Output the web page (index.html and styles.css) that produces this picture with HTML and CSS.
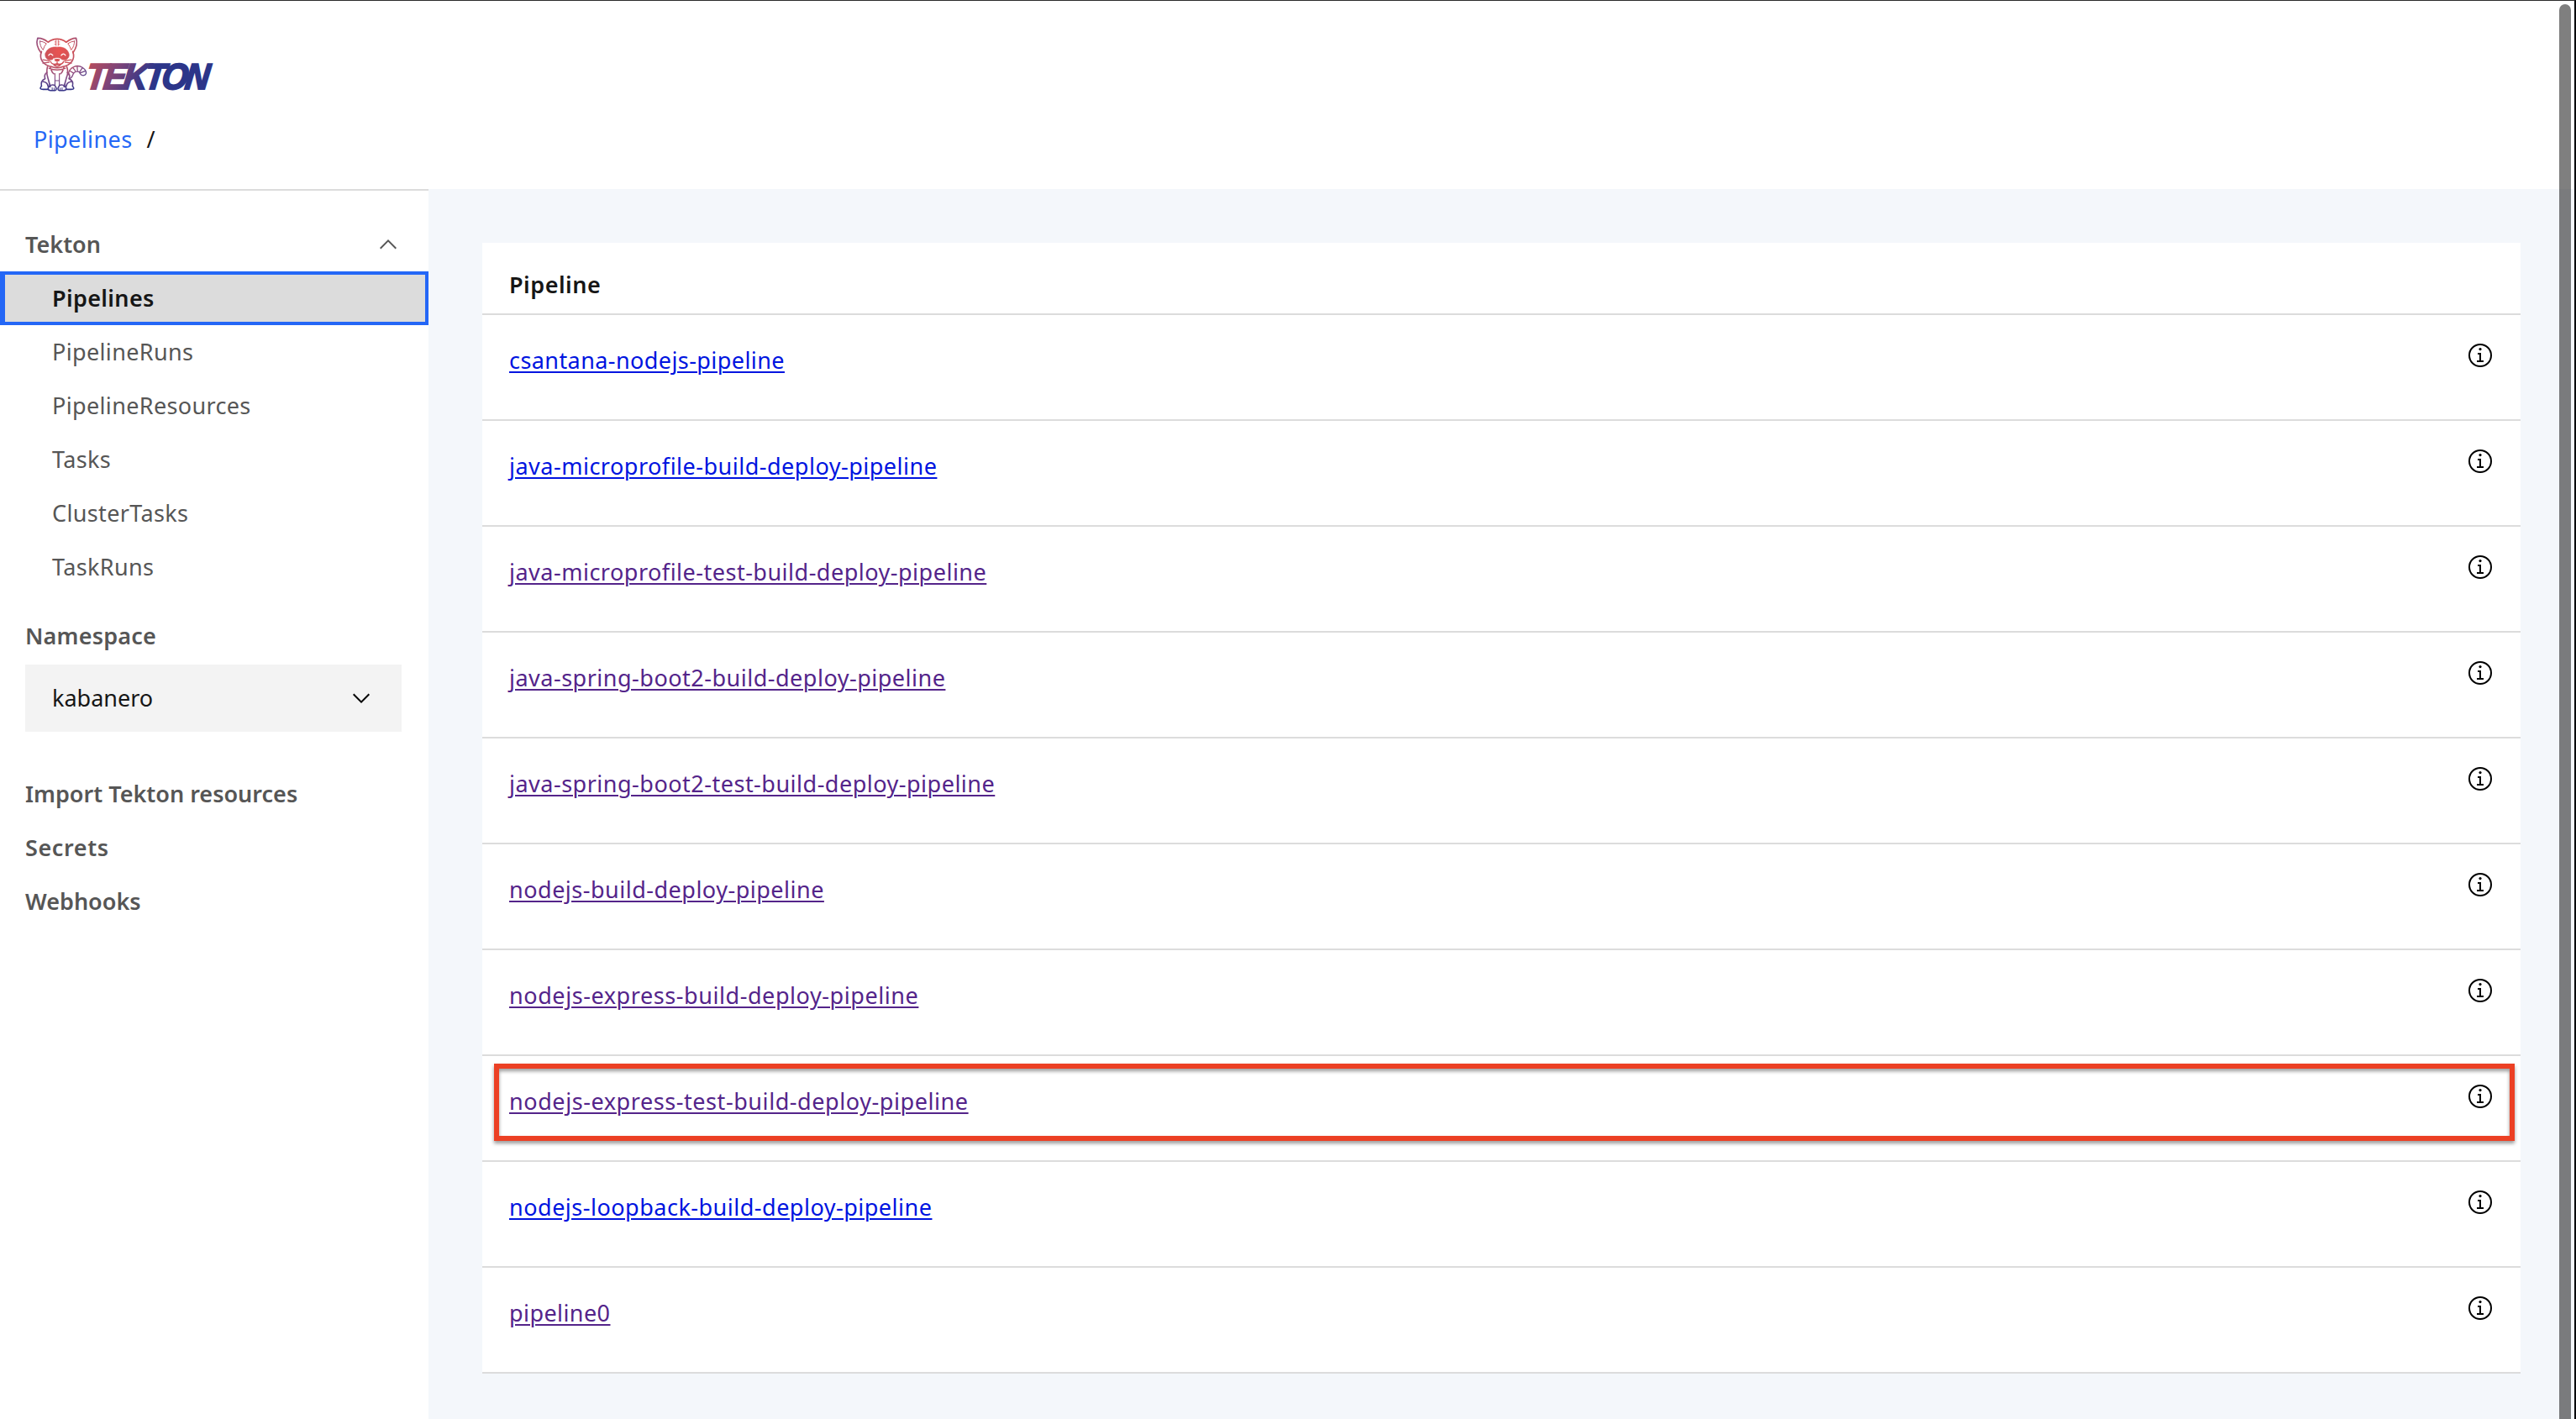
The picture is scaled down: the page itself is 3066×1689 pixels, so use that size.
FILE: index.html
```html
<!DOCTYPE html>
<html lang="en">
<head>
<meta charset="utf-8">
<title>Tekton Dashboard</title>
<link rel="stylesheet" href="styles.css">
</head>
<body>
<svg class="symbols" aria-hidden="true">
  <symbol id="info" viewBox="0 0 16 16">
    <circle cx="8" cy="8" r="6.5" fill="none" stroke="#000"/>
    <path d="M8.5 11V6.5h-2v1h1V11H6v1h4v-1z"/>
    <circle cx="8" cy="4.3" r=".8"/>
  </symbol>
  <symbol id="chevron" viewBox="0 0 16 16">
    <path d="M8 5l5 5-.7.7L8 6.4l-4.3 4.3L3 10z"/>
  </symbol>
</svg>
<header class="header">
  <svg class="logo" viewBox="0 0 780 270" role="img" aria-label="Tekton">
    <defs>
      <radialGradient id="cat" gradientUnits="userSpaceOnUse" cx="155" cy="95" r="150">
        <stop offset="0" stop-color="#ea5350"/>
        <stop offset=".32" stop-color="#cf5258"/>
        <stop offset=".65" stop-color="#8c4f86"/>
        <stop offset="1" stop-color="#2d3288"/>
      </radialGradient>
      <linearGradient id="word" gradientUnits="userSpaceOnUse" x1="10" y1="-110" x2="225" y2="0">
        <stop offset="0" stop-color="#b84c5c"/>
        <stop offset=".45" stop-color="#7f4478"/>
        <stop offset="1" stop-color="#2c3589"/>
      </linearGradient>
    </defs>
    <g transform="scale(.98)" fill="none" stroke="url(#cat)" stroke-width="5" stroke-linecap="round" stroke-linejoin="round">
      <path d="M88 100C74 82 71 62 76 47C92 47 105 54 114 62C134 46 160 46 180 62C190 54 202 47 216 47C221 62 218 82 205 100"/>
      <path d="M90 96C80 124 96 146 130 152Q147 158 164 152C198 146 214 124 204 96"/>
      <path d="M84 58C84 70 88 82 96 90Q99 76 108 67Q96 59 84 58zM210 58C210 70 206 82 198 90Q194 76 186 67Q198 59 210 58z" stroke-width="3"/>
      <path d="M143 61h-5M151 61h5M143 69h-5M151 69h5M143 54v20M151 54v20" stroke-width="2.5"/>
      <path d="M104 104C110 84 128 78 147 80C166 78 184 84 190 104C192 114 188 122 178 126Q164 128 158 121Q147 114 136 121Q130 128 116 126C106 122 102 114 104 104z" fill="url(#cat)" stroke-width="2"/>
      <path d="M116 110q7-11 15 0M162 110q8-11 15 0" stroke="#fff" stroke-width="4"/>
      <path d="M134 123q13-5 26 0q-2 11-13 12q-11-1-13-12z" fill="url(#cat)" stroke="#fff" stroke-width="3"/>
      <path d="M147 135v5M123 132q5 14 24 8q18 6 24-8M134 144q13 14 26 0zM95 126l24 4M95 138l23-3M199 126l-24 4M199 138l-23-3" stroke-width="4"/>
      <path d="M112 151C108 166 109 179 113 191L122 224M182 151C188 166 186 179 181 191L172 224M118 157q29 12 58 0M123 155Q127 172 135 177M171 155Q167 172 159 177"/>
      <path d="M110 172Q98 180 103 195Q86 202 90 222Q79 234 96 234H112M184 172Q197 180 190 195Q208 202 203 222Q214 234 198 234H182M97 206q15 2 17 17M197 206q-15 2-17 17"/>
      <path d="M139 176V219M155 176V219M139 202h16" stroke-width="3.5"/>
      <path d="M118 222Q108 237 123 238H139Q149 235 139 220Q130 214 118 222zM176 222Q186 237 171 238H155Q145 235 155 220Q164 214 176 222z"/>
      <path d="M129 228v8M165 228v8M136 229v7M158 229v7" stroke-width="3"/>
      <path d="M188 180C190 151 221 142 239 154C250 162 254 171 252 177C249 185 235 185 231 177C230 167 211 164 205 179Q202 190 194 194M193 166l14 9M204 154l9 12M220 149l1 17M239 155l-9 14M249 167l-17 6" stroke-width="4"/>
    </g>
    <text class="wordmark" transform="translate(243 227) skewX(-7) scale(.925 1)">TEKTON</text>
  </svg>
  <nav class="breadcrumb"><a class="crumb">Pipelines</a><span>/</span></nav>
</header>
<div class="shell">
  <aside class="sidebar">
    <div class="nav-item nav-heading"><span>Tekton</span><svg class="icon"><use href="#chevron"/></svg></div>
    <a class="nav-item nav-sub selected">Pipelines</a>
    <a class="nav-item nav-sub">PipelineRuns</a>
    <a class="nav-item nav-sub">PipelineResources</a>
    <a class="nav-item nav-sub">Tasks</a>
    <a class="nav-item nav-sub">ClusterTasks</a>
    <a class="nav-item nav-sub">TaskRuns</a>
    <div class="namespace">
      <div class="namespace-label">Namespace</div>
      <div class="select"><span>kabanero</span><svg class="icon down"><use href="#chevron"/></svg></div>
    </div>
    <a class="nav-item nav-heading">Import Tekton resources</a>
    <a class="nav-item nav-heading secrets">Secrets</a>
    <a class="nav-item nav-heading">Webhooks</a>
  </aside>
  <main class="content">
    <div class="table">
      <div class="thead">Pipeline</div>
      <div class="row"><a class="link tight">csantana-nodejs-pipeline</a><svg class="icon"><use href="#info"/></svg></div>
      <div class="row"><a class="link">java-microprofile-build-deploy-pipeline</a><svg class="icon"><use href="#info"/></svg></div>
      <div class="row"><a class="link visited">java-microprofile-test-build-deploy-pipeline</a><svg class="icon"><use href="#info"/></svg></div>
      <div class="row"><a class="link visited">java-spring-boot2-build-deploy-pipeline</a><svg class="icon"><use href="#info"/></svg></div>
      <div class="row"><a class="link visited">java-spring-boot2-test-build-deploy-pipeline</a><svg class="icon"><use href="#info"/></svg></div>
      <div class="row"><a class="link visited">nodejs-build-deploy-pipeline</a><svg class="icon"><use href="#info"/></svg></div>
      <div class="row"><a class="link visited wide">nodejs-express-build-deploy-pipeline</a><svg class="icon"><use href="#info"/></svg></div>
      <div class="row marked"><a class="link visited wide">nodejs-express-test-build-deploy-pipeline</a><svg class="icon"><use href="#info"/></svg></div>
      <div class="row"><a class="link">nodejs-loopback-build-deploy-pipeline</a><svg class="icon"><use href="#info"/></svg></div>
      <div class="row"><a class="link visited tight">pipeline0</a><svg class="icon"><use href="#info"/></svg></div>
    </div>
  </main>
</div>
<div class="scrollbar"></div>
</body>
</html>
```
FILE: styles.css
```css
* { box-sizing: border-box; }

body {
  margin: 0;
  height: 1689px;
  display: flex;
  flex-direction: column;
  position: relative;
  overflow: hidden;
  border-top: 1px solid #2b2b2b;
  border-right: 2px solid #07080c;
  background: #fff;
  color: #161616;
  font: 27px/36px "Noto Sans", sans-serif;
}

.symbols { display: none; }

.icon {
  width: 32px;
  height: 32px;
  flex: none;
}

.header {
  height: 224px;
  flex: none;
  padding: 29px 20px 0;
}

.logo {
  display: block;
  width: 260px;
  height: 90px;
  overflow: visible;
}

.wordmark {
  font: italic bold 130px "Liberation Sans", sans-serif;
  letter-spacing: -11px;
  fill: url(#word);
  stroke: url(#word);
  stroke-width: 6px;
}

.breadcrumb {
  display: flex;
  gap: 17px;
  margin: 28px 0 0 20px;
}

.crumb {
  color: #2467f6;
  letter-spacing: .4px;
}

.shell {
  flex: 1;
  display: flex;
  min-height: 0;
}

.sidebar {
  width: 510px;
  flex: none;
  border-top: 2px solid #dcdcdc;
  padding-top: 32px;
  color: #565656;
}

.nav-item {
  height: 64px;
  display: flex;
  align-items: center;
}

.nav-heading {
  justify-content: space-between;
  padding: 0 32px 0 30px;
  font-weight: 600;
}

.nav-heading .icon { fill: #565656; }

.nav-sub {
  padding-left: 62px;
  letter-spacing: .35px;
}

.selected {
  background: #dcdcdc;
  border: 4px solid #2467f6;
  border-left-width: 6px;
  padding-left: 56px;
  color: #161616;
  font-weight: 600;
}

.namespace { padding: 32px 32px 0 30px; }

.namespace-label {
  height: 52px;
  font-weight: 600;
  letter-spacing: .2px;
}

.select {
  height: 80px;
  margin-bottom: 42px;
  padding: 0 32px;
  display: flex;
  align-items: center;
  justify-content: space-between;
  background: #f3f3f3;
  color: #161616;
}

.down { transform: rotate(180deg); }

.secrets { letter-spacing: .6px; }

.content {
  flex: 1;
  background: #f4f7fb;
  padding: 64px 64px 0;
}

.table { background: #fff; }

.thead {
  height: 86px;
  padding: 32px 32px 0;
  border-bottom: 2px solid #dcdcdc;
  font-weight: 600;
  letter-spacing: .5px;
}

.row {
  height: 126px;
  position: relative;
  display: flex;
  justify-content: space-between;
  align-items: flex-start;
  padding: 32px 32px 0;
  border-bottom: 2px solid #dcdcdc;
}

.link {
  margin-top: 4px;
  color: #0014e0;
  letter-spacing: .5px;
  text-decoration: underline;
  text-decoration-thickness: 2px;
  text-underline-offset: 3px;
}

.visited { color: #54248a; }
.tight { letter-spacing: .42px; }
.wide { letter-spacing: .57px; }

.marked::after {
  content: "";
  position: absolute;
  inset: 9px 7px 23px 14px;
  border: 6px solid #ec4024;
  filter: drop-shadow(0 3px 2px rgba(0, 0, 0, .4));
}

.scrollbar {
  position: absolute;
  top: 4px;
  right: 4px;
  width: 14px;
  height: 1720px;
  border-radius: 7px;
  background: rgba(0, 0, 0, .5);
}
```
